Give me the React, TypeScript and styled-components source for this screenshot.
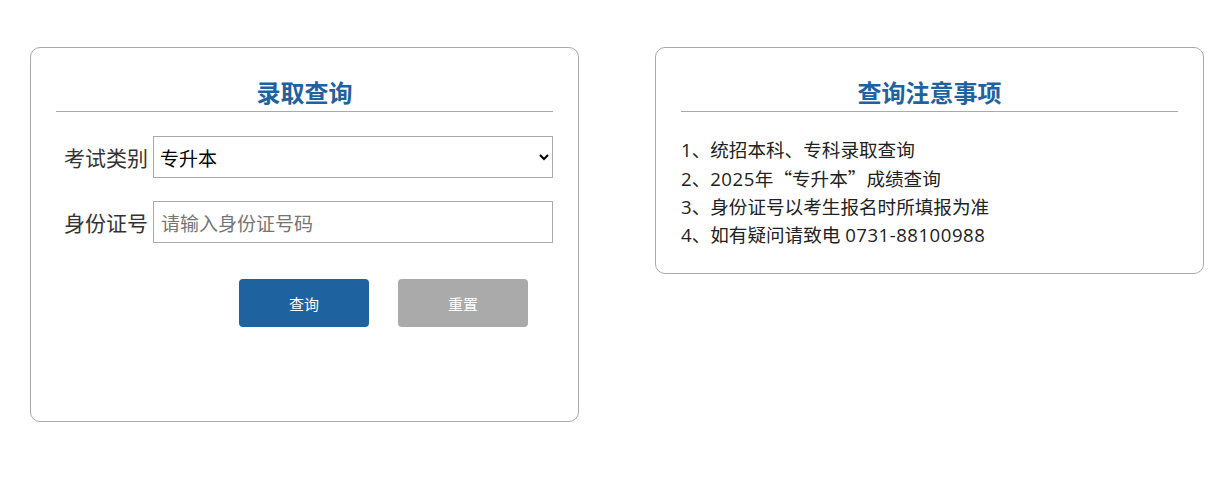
import React from "react";
import styled, { createGlobalStyle } from "styled-components";

const Global = createGlobalStyle`
  html, body { margin: 0; padding: 0; background: #fff; }
  body { font-family: "Noto Sans CJK SC", "Noto Sans", sans-serif; color: #333; }
  * { box-sizing: border-box; }
`;

const Page = styled.div`
  display: flex;
  align-items: flex-start;
  gap: 76px;
  padding: 47px 30px;
`;

const Card = styled.div<{ $h?: number }>`
  flex: 0 0 549px;
  width: 549px;
  ${(p) => (p.$h ? `height: ${p.$h}px;` : "")}
  border: 1px solid #aaa;
  border-radius: 10px;
  padding: 27px 25px 24px;
`;

const Title = styled.h2`
  margin: 0;
  height: 37px;
  line-height: 33px;
  font-size: 24px;
  font-weight: 700;
  color: #1e62a0;
  text-align: center;
  border-bottom: 1px solid #aaa;
`;

const Form = styled.div`
  display: flex;
  flex-direction: column;
  padding-top: 24px;
  gap: 23px;
`;

const Row = styled.div`
  display: flex;
  align-items: center;
  gap: 5px;
`;

const Label = styled.label`
  width: 92px;
  text-align: right;
  font-size: 21px;
  color: #333;
  white-space: nowrap;
`;

const fieldCss = `
  flex: 1;
  height: 42px;
  border: 1px solid #aaa;
  border-radius: 0;
  font-family: "Noto Sans CJK SC", "Noto Sans", sans-serif;
  font-size: 19px;
  background: #fff;
  outline: none;
`;

const Select = styled.select`
  ${fieldCss}
  padding: 0 6px 0 2px;
  color: #000;
`;

const Input = styled.input`
  ${fieldCss}
  padding: 0 7px;
  color: #000;
  &::placeholder { color: #757575; }
`;

const Buttons = styled.div`
  display: flex;
  gap: 29px;
  padding-left: 183px;
  margin-top: 13px;
`;

const Button = styled.button<{ $variant: "primary" | "gray" }>`
  width: 130px;
  height: 48px;
  border: none;
  border-radius: 4px;
  color: #fff;
  font-family: "Noto Sans CJK SC", "Noto Sans", sans-serif;
  font-size: 15px;
  background: ${(p) => (p.$variant === "primary" ? "#1e63a0" : "#aaaaaa")};
  cursor: pointer;
`;

const List = styled.ul`
  list-style: none;
  margin: 0;
  padding: 24px 0 0;
`;

const Item = styled.li`
  font-family: "Open Sans", "Noto Sans CJK SC", sans-serif;
  font-size: 18.6px;
  line-height: 28px;
  color: #222;
`;

const Cjk = styled.span`
  font-family: "Noto Sans CJK SC", sans-serif;
`;

const Num = styled.span`
  letter-spacing: 0.5px;
`;

export default function App() {
  return (
    <>
      <Global />
      <Page>
        <Card $h={375}>
          <Title>录取查询</Title>
          <Form>
            <Row>
              <Label>考试类别</Label>
              <Select defaultValue="专升本">
                <option>专升本</option>
              </Select>
            </Row>
            <Row>
              <Label>身份证号</Label>
              <Input placeholder="请输入身份证号码" />
            </Row>
            <Buttons>
              <Button $variant="primary">查询</Button>
              <Button $variant="gray">重置</Button>
            </Buttons>
          </Form>
        </Card>
        <Card>
          <Title>查询注意事项</Title>
          <List>
            <Item>1、统招本科、专科录取查询</Item>
            <Item>
              2、<Num>2025</Num>年<Cjk>“</Cjk>专升本<Cjk>”</Cjk>成绩查询
            </Item>
            <Item>3、身份证号以考生报名时所填报为准</Item>
            <Item>
              4、如有疑问请致电 <Num>0731-88100988</Num>
            </Item>
          </List>
        </Card>
      </Page>
    </>
  );
}
